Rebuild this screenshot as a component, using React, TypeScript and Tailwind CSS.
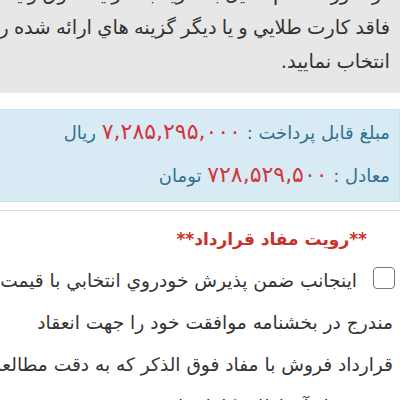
export default function App() {
  return (
    <div className="w-[400px] h-[400px] overflow-hidden bg-white" dir="rtl">
      <div className="w-[424px] text-[18.6px] text-[#333] font-['DejaVu_Sans',sans-serif]">
        {/* notice box */}
        <div className="-mt-[23px] bg-[#e7e7e8] pr-[10px] pb-[14px] text-[19.5px] leading-[34px] whitespace-nowrap [word-spacing:-1px]">
          <div>در صورت عدم تمایل به خرید با شرایط فوق و یا در صورتی که</div>
          <div>فاقد کارت طلايي و یا دیگر گزینه هاي ارائه شده را</div>
          <div>انتخاب نمایید.</div>
        </div>

        {/* amount box */}
        <div className="mt-[16px] border border-[#c7e3ef] bg-[#d8ebf5] pr-[9px] pt-[1px] pb-[4px] text-[18px] leading-[42px] text-[#31708f] whitespace-nowrap">
          <div>
            مبلغ قابل پرداخت : <span className="text-[#d2363c] text-[22px] tracking-[4.5px]">۷,۲۸۵,۲۹۵,۰۰۰</span> ریال
          </div>
          <div>
            معادل : <span className="text-[#d2363c] text-[22px] tracking-[4.5px]">۷۲۸,۵۲۹,۵۰۰</span> تومان
          </div>
        </div>

        {/* contract section */}
        <div className="mt-[8px] border-t border-[#dddddd]">
          <div className="pt-[16px] pr-[33px] text-[17px] leading-[24px] font-bold text-[#c9302c]">
            **رویت مفاد قرارداد**
          </div>
          <div className="mt-[9px] pr-[5px] leading-[42px] whitespace-nowrap">
            <div className="flex items-center">
              <span className="inline-block shrink-0 w-[22px] h-[22px] rounded-[4px] border border-[#777] bg-white ml-[16px] -mt-[6px]" />
              <span>اینجانب ضمن پذیرش خودروي انتخابي با قیمت</span>
            </div>
            <div className="pr-[2px]">مندرج در بخشنامه موافقت خود را جهت انعقاد</div>
            <div className="pr-[2px]">قرارداد فروش با مفاد فوق الذکر که به دقت مطالعه</div>
            <div className="pr-[2px]">نموده و از آن اطلاع کامل دارم</div>
          </div>
        </div>
      </div>
    </div>
  );
}
